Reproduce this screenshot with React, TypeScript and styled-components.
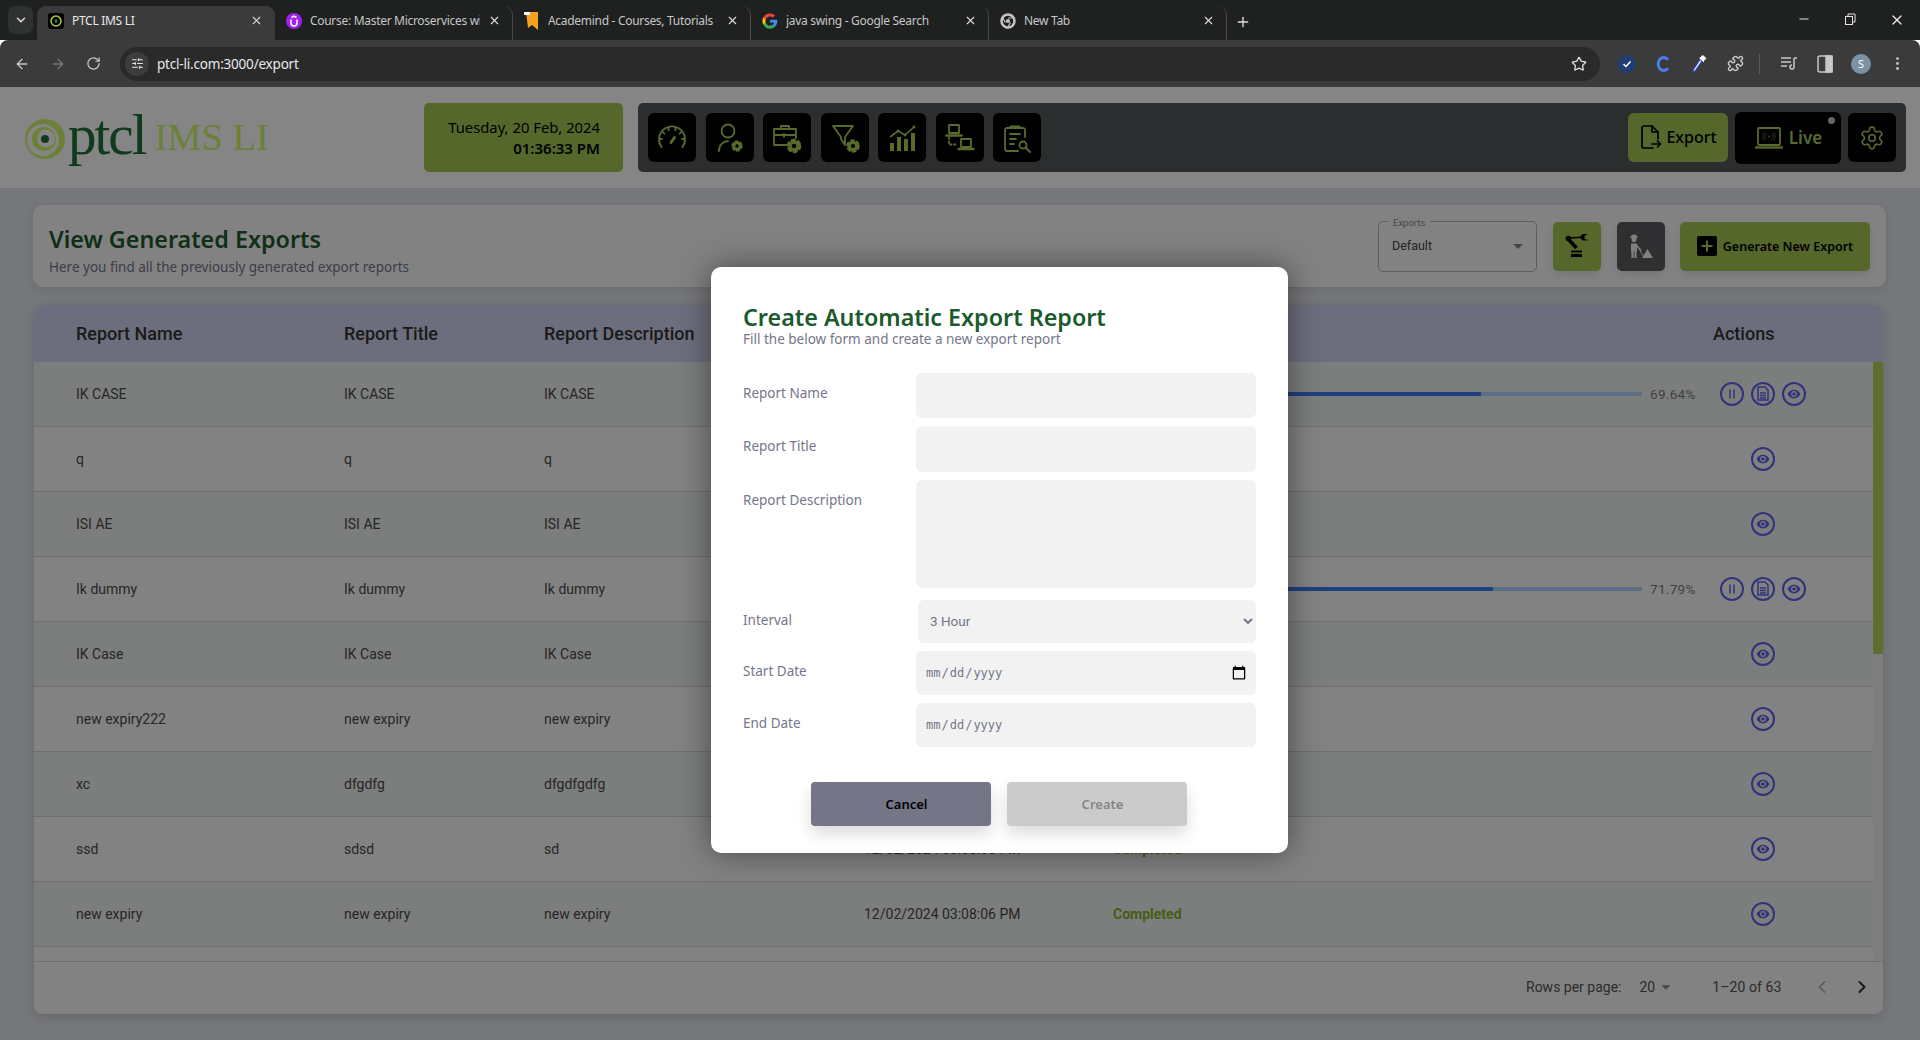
import React from 'react'
import styled, { createGlobalStyle } from 'styled-components'
import { Settings, Star, ArrowLeft, ArrowRight, RotateCw, ChevronDown, ChevronLeft, ChevronRight, X, Plus, Minus, MoreVertical, Puzzle, SlidersHorizontal } from 'lucide-react'
import { MdRemoveRedEye, MdArrowDropDown } from 'react-icons/md'

const GlobalStyle = createGlobalStyle`
  html, body { margin: 0; padding: 0; height: 100%; overflow: hidden; }
  #root { height: 100%; }
  * { box-sizing: border-box; }
  body { font-family: "Noto Sans", sans-serif; }
`

const Shell = styled.div`
  width: 1920px;
  height: 1040px;
  display: flex;
  flex-direction: column;
`

/* browser chrome */
const TabStrip = styled.div`
  height: 40px;
  background: #1f2121;
  display: flex;
  align-items: flex-end;
  padding-left: 8px;
  position: relative;
`

const TabSearch = styled.div`
  width: 25px;
  height: 28px;
  margin-bottom: 6px;
  margin-right: 4px;
  background: #303131;
  border-radius: 8px;
  color: #ddd;
  display: flex;
  align-items: center;
  justify-content: center;
`

const Tab = styled.div<{ $active?: boolean; $sep?: boolean }>`
  width: 238px;
  height: 34px;
  flex: none;
  display: flex;
  align-items: center;
  padding-left: 11px;
  padding-bottom: 5px;
  position: relative;
  background: ${p => (p.$active ? '#3b3b3b' : 'transparent')};
  border-radius: 9px 9px 0 0;
  color: ${p => (p.$active ? '#e8e8e8' : '#c6c6c6')};
  font-size: 12px;
  border-right: ${p => (p.$sep ? '1px solid #4a4a4a' : 'none')};
  background-clip: ${p => (p.$sep ? 'padding-box' : 'border-box')};
`

const TabTitle = styled.span`
  width: 170px;
  margin-left: 8px;
  white-space: nowrap;
  overflow: hidden;
  letter-spacing: -0.3px;
`

const TabClose = styled.span`
  margin-left: 8px;
  color: #ddd;
  display: flex;
`

const NewTab = styled.span`
  color: #ddd;
  margin-left: 8px;
  margin-bottom: 10px;
  display: flex;
`

const WindowButtons = styled.div`
  margin-left: auto;
  display: flex;
  align-self: center;
  gap: 32px;
  padding-right: 15px;
  color: #e4e4e4;
`

const Toolbar = styled.div`
  height: 47px;
  background: #3b3b3b;
  border-radius: 8px 8px 0 0;
  display: flex;
  align-items: center;
  color: #c8c8c8;
  padding-left: 14px;
`

const NavIcons = styled.div`
  display: flex;
  gap: 20px;
  width: 106px;
`

const Omnibox = styled.div`
  width: 1480px;
  height: 34px;
  background: #2a2a2a;
  border-radius: 17px;
  display: flex;
  align-items: center;
  padding-left: 5px;
  padding-right: 13px;
  color: #e8e8e8;
  font-size: 13.5px;
  letter-spacing: -0.2px;
`

const TuneIcon = styled.span`
  width: 24px;
  height: 24px;
  background: #3d3d3d;
  border-radius: 50%;
  display: flex;
  align-items: center;
  justify-content: center;
  margin-right: 8px;
`

const StarIcon = styled.span`
  margin-left: auto;
  display: flex;
  color: #ddd;
`

const ExtIcons = styled.div`
  display: flex;
  align-items: center;
  margin-left: 17px;
  gap: 16px;
`

const ExtIcon = styled.span`
  width: 20px;
  height: 20px;
  display: flex;
  align-items: center;
  justify-content: center;
`

const ExtDivider = styled.span`
  width: 1px;
  height: 20px;
  background: #5a5a5a;
  margin: 0 3px 0 -2px;
`

const Avatar = styled.span`
  width: 20px;
  height: 20px;
  border-radius: 50%;
  background: #7b93a4;
  color: #fff;
  font-size: 11px;
  display: flex;
  align-items: center;
  justify-content: center;
`

/* app */
const Page = styled.div`
  flex: 1;
  position: relative;
  display: flex;
  flex-direction: column;
  min-height: 0;
  background: #e3e5eb;
`

const Header = styled.header`
  height: 101px;
  background: #fff;
  display: flex;
  padding: 16px 14px 16px 25px;
`

const Logo = styled.div`
  width: 399px;
  display: flex;
  align-items: flex-start;
`

const LogoMark = styled.svg`
  margin-top: 16px;
  flex: none;
`

const LogoPtcl = styled.span`
  font-family: "Liberation Serif", serif;
  font-size: 57px;
  letter-spacing: -2px;
  color: #1d6f3a;
  line-height: 1;
  margin: 3px 0 0 3px;
`

const LogoIms = styled.span`
  font-family: "Liberation Serif", serif;
  font-size: 38.5px;
  line-height: 1;
  color: #cdf76a;
  margin: 15px 0 0 9px;
`

const DateBox = styled.div`
  width: 199px;
  height: 69px;
  background: #a3c653;
  border-radius: 5px;
  display: flex;
  flex-direction: column;
  justify-content: center;
  align-items: flex-end;
  padding-right: 23px;
  color: #000;
  font-size: 14.8px;
  line-height: 21px;
  margin-right: 15px;
`

const TimeText = styled.strong`
  font-weight: 600;
  font-size: 15px;
`

const DarkBar = styled.nav`
  flex: 1;
  height: 69px;
  background: #55575b;
  border-radius: 5px;
  display: flex;
  align-items: center;
  padding: 0 10px;
`

const NavGroup = styled.div`
  display: flex;
  gap: 9.5px;
`

const IconBtn = styled.button`
  width: 48px;
  height: 49px;
  border: none;
  border-radius: 6px;
  background: #000;
  color: #a9cd57;
  padding: 0;
  display: flex;
  align-items: center;
  justify-content: center;
`

const ExportBtn = styled.button`
  width: 100px;
  height: 49px;
  margin-left: auto;
  border: none;
  border-radius: 6px;
  background: #a3c653;
  color: #000;
  font: 500 16px "Noto Sans", sans-serif;
  display: flex;
  align-items: center;
  justify-content: center;
  gap: 3px;
  padding-bottom: 2px;
`

const LiveBtn = styled.button`
  width: 106px;
  height: 52px;
  margin: 0 7px;
  border: none;
  border-radius: 6px;
  background: #000;
  color: #a9cd57;
  font: 600 17px "Noto Sans", sans-serif;
  display: flex;
  align-items: center;
  justify-content: center;
  gap: 5px;
  position: relative;
`

const LiveDot = styled.span`
  position: absolute;
  top: 5px;
  right: 6px;
  width: 7px;
  height: 7px;
  border-radius: 50%;
  background: #c5c5c5;
`

const Content = styled.main`
  flex: 1;
  min-height: 0;
  padding: 17px 34px 0 33px;
  display: flex;
  flex-direction: column;
  gap: 18px;
`

const TitleCard = styled.section`
  height: 82px;
  background: #fafafa;
  border-radius: 10px;
  box-shadow: 0 3px 10px rgba(0, 0, 0, 0.1);
  display: flex;
  align-items: center;
  padding: 0 16px 0 16px;
`

const TitleBlock = styled.div`
  display: flex;
  flex-direction: column;
  margin-top: 8px;
`

const CardTitle = styled.h1`
  margin: 0;
  font-size: 23.3px;
  line-height: 30px;
  font-weight: 600;
  color: #1c5a2e;
`

const CardSub = styled.p`
  margin: 3px 0 0;
  font-size: 13.5px;
  line-height: 20px;
  color: #74768a;
`

const ExportsSelect = styled.div`
  width: 159px;
  height: 51px;
  margin-left: auto;
  border: 1px solid #b5b5b5;
  border-radius: 5px;
  display: flex;
  align-items: center;
  justify-content: space-between;
  padding: 0 6px 1px 13px;
  position: relative;
  font: 400 12.5px Roboto, sans-serif;
  color: #444;
`

const ExportsLabel = styled.span`
  position: absolute;
  top: -5px;
  left: 9px;
  padding: 0 5px;
  background: #fafafa;
  font-size: 9.5px;
  line-height: 11px;
  color: #888;
`

const SquareBtn = styled.button<{ $dark?: boolean }>`
  width: 48px;
  height: 49px;
  margin-left: 16px;
  border: none;
  border-radius: 5px;
  background: ${p => (p.$dark ? '#5a5b60' : '#a3c653')};
  color: ${p => (p.$dark ? '#f5f5f5' : '#000')};
  display: flex;
  align-items: center;
  justify-content: center;
  padding: 0;
  box-shadow: 0 4px 8px rgba(0, 0, 0, 0.1);
`

const GenerateBtn = styled.button`
  width: 190px;
  height: 49px;
  margin-left: 15px;
  border: none;
  border-radius: 5px;
  background: #a3c653;
  color: #000;
  font: 600 12.5px "Noto Sans", sans-serif;
  display: flex;
  align-items: center;
  justify-content: center;
  gap: 6px;
  box-shadow: 0 4px 8px rgba(0, 0, 0, 0.1);
`

const PlusBox = styled.span`
  width: 20px;
  height: 20px;
  background: #000;
  border-radius: 2px;
  color: #a9cd57;
  display: flex;
  align-items: center;
  justify-content: center;
`

const TableCard = styled.section`
  width: 1849px;
  height: 709px;
  margin-left: 1px;
  background: #fafafa;
  border-radius: 8px;
  box-shadow: 0 3px 12px rgba(0, 0, 0, 0.15);
  display: flex;
  flex-direction: column;
  overflow: hidden;
`

const columns = '268px 200px 320px 249px 600px 160px'

const TableHead = styled.div`
  height: 57px;
  flex: none;
  background: #d1d3ef;
  display: grid;
  grid-template-columns: ${columns};
  align-items: center;
  padding: 0 0 0 42px;
  font: 500 18px Roboto, sans-serif;
  color: #333;
`

const TableBody = styled.div`
  height: 599px;
  flex: none;
  display: flex;
  overflow: hidden;
`

const Rows = styled.div`
  width: 1839px;
  flex: none;
`

const Row = styled.div<{ $shade: boolean }>`
  height: 65px;
  display: grid;
  grid-template-columns: ${columns};
  align-items: center;
  padding: 0 0 1px 42px;
  background: ${p => (p.$shade ? '#eef2ef' : '#fafafa')};
  border-bottom: 1px solid #d4d4d4;
  font: 400 14px Roboto, sans-serif;
  color: #4a4a4a;
`

const Scrollbar = styled.div`
  width: 10px;
  flex: none;
  background: #f2f2f2;
`

const ScrollThumb = styled.div`
  height: 292px;
  background: #b0d45d;
`

const StatusDone = styled.span`
  font-weight: 700;
  color: #86b02c;
`

const ProgressWrap = styled.div`
  display: flex;
  align-items: center;
  gap: 8px;
`

const ProgressTrack = styled.div`
  width: 529px;
  height: 4px;
  background: #b3d5ff;
`

const ProgressFill = styled.div`
  height: 100%;
  background: #3c7bf6;
`

const Percent = styled.span`
  font-size: 13.5px;
  color: #7c7c7c;
  letter-spacing: 0.3px;
`

const Actions = styled.div`
  width: 100px;
  display: flex;
  justify-content: center;
  gap: 7px;
`

const ActionBtn = styled.span`
  width: 24px;
  height: 24px;
  border: 2px solid #5e62ea;
  border-radius: 50%;
  color: #5e62ea;
  display: flex;
  align-items: center;
  justify-content: center;
`

const Footer = styled.footer`
  flex: 1;
  border-top: 1px solid #d4d4d4;
  display: flex;
  align-items: center;
  padding: 0 0 2px 1492px;
  font: 400 14px Roboto, sans-serif;
  color: #555;
`

const RowsValue = styled.span`
  margin-left: 18px;
  display: flex;
  align-items: center;
  color: #555;
`

const RowsCount = styled.span`
  margin-left: 35px;
  letter-spacing: 0.1px;
`

const Pager = styled.span<{ $off?: boolean }>`
  display: flex;
  color: ${p => (p.$off ? '#aaa' : '#333')};
  margin-left: ${p => (p.$off ? '30px' : '20px')};
`

/* modal */
const Overlay = styled.div`
  position: absolute;
  inset: 0;
  background: rgba(0, 0, 0, 0.48);
  padding: 180px 0 0 711px;
`

const Modal = styled.div`
  width: 577px;
  height: 586px;
  background: #fff;
  border-radius: 10px;
  padding: 36px 32px 0;
  box-shadow: 0 0 32px rgba(0, 0, 0, 0.45);
`

const ModalTitle = styled.h2`
  margin: 0;
  font-size: 23.3px;
  line-height: 28px;
  font-weight: 600;
  color: #1c5a2e;
`

const ModalSub = styled.p`
  margin: 0;
  font-size: 13.5px;
  line-height: 16px;
  color: #74768a;
`

const Form = styled.form`
  margin-top: 26px;
  display: flex;
  flex-direction: column;
  gap: 8px;
`

const FieldRow = styled.label<{ $gapTop?: boolean }>`
  display: flex;
  margin-top: ${p => (p.$gapTop ? '4px' : '0')};
`

const FieldLabel = styled.span`
  width: 173px;
  flex: none;
  padding-top: 10px;
  font-size: 13.5px;
  line-height: 20px;
  color: #74768a;
`

const TextField = styled.input<{ $h: number }>`
  flex: 1;
  height: ${p => p.$h}px;
  border: none;
  border-radius: 6px;
  background: #f2f2f2;
  outline: none;
`

const AreaField = styled.textarea`
  flex: 1;
  height: 108px;
  border: none;
  border-radius: 6px;
  background: #f2f2f2;
  outline: none;
  resize: none;
`

const SelectField = styled.select`
  flex: 1;
  height: 43px;
  margin-left: 2px;
  border: none;
  border-radius: 6px;
  background-color: #f2f2f2;
  padding: 0 0 2px 8px;
  font: 400 13.5px Roboto, sans-serif;
  color: #74768a;
  outline: none;
`

const DateField = styled.input<{ $noIcon?: boolean }>`
  flex: 1;
  height: 44px;
  border: none;
  border-radius: 6px;
  background: #f2f2f2;
  padding: 0 9px;
  font: 400 12px "DejaVu Sans Mono", monospace;
  color: #74768a;
  outline: none;
  &::-webkit-calendar-picker-indicator {
    opacity: ${p => (p.$noIcon ? 0 : 1)};
    width: 16px;
    height: 16px;
    padding: 0;
  }
`

const ModalActions = styled.div`
  margin-top: 35px;
  padding-right: 2px;
  display: flex;
  justify-content: center;
  gap: 16px;
`

const ModalBtn = styled.button<{ $muted?: boolean }>`
  width: 180px;
  height: 44px;
  border: none;
  border-radius: 4px;
  padding: 0 0 1px 12px;
  background: ${p => (p.$muted ? '#cbcbcb' : '#747687')};
  color: ${p => (p.$muted ? '#858585' : '#000')};
  font: 600 13px "Noto Sans", sans-serif;
  box-shadow: 0 8px 16px rgba(0, 0, 0, 0.14);
`

/* drawings */
const Cog = ({ x, y, r = 5 }: { x: number; y: number; r?: number }) => (
  <g>
    <circle cx={x} cy={y} r={r * 0.62} fill="none" stroke="currentColor" strokeWidth={r * 0.55} />
    <circle cx={x} cy={y} r={r * 0.95} fill="none" stroke="currentColor" strokeWidth={r * 0.35} strokeDasharray={`${r * 0.5} ${r * 0.5}`} />
  </g>
)

const NavSvg = ({ children }: { children: React.ReactNode }) => (
  <svg width="32" height="32" viewBox="0 0 32 32" fill="none" stroke="currentColor" strokeWidth="1.8" strokeLinecap="round" strokeLinejoin="round">
    {children}
  </svg>
)

const GaugeIcon = () => (
  <NavSvg>
    <path d="M5.5 25 A13 13 0 1 1 26.5 25" />
    <path d="M3.5 17h2.5M6.5 10l2 1.6M12 6l.8 2.2M20 6l-.8 2.2M25.5 10l-2 1.6M28.5 17H26" />
    <path d="M15 20.5l3.5-5" strokeWidth="3" />
  </NavSvg>
)

const UserCogIcon = () => (
  <NavSvg>
    <circle cx="14" cy="9" r="6.5" />
    <path d="M5 29c0-6 4-9.500 9-10" />
    <Cog x={23} y={24} r={5} />
  </NavSvg>
)

const CaseCogIcon = () => (
  <NavSvg>
    <path d="M19 23H3V7h22v9M3 13h22M10 7V4h8v3" />
    <path d="M13 12v3" />
    <Cog x={23} y={24} r={6.5} />
  </NavSvg>
)

const FilterCogIcon = () => (
  <NavSvg>
    <path d="M4 4h20L16 15v8l-4-6v-2z" />
    <Cog x={24} y={24} r={6} />
  </NavSvg>
)

const ChartIcon = () => (
  <svg width="32" height="32" viewBox="0 0 32 32" fill="currentColor" stroke="none">
    <rect x="4" y="21" width="4" height="8" />
    <rect x="11" y="15" width="4" height="14" />
    <rect x="18" y="17" width="4" height="12" />
    <rect x="25" y="11" width="4" height="18" />
    <path d="M4 15l8-6 7 4 9-8" fill="none" stroke="currentColor" strokeWidth="1.6" />
    <circle cx="12" cy="9" r="1.4" />
    <circle cx="19" cy="13" r="1.4" />
    <circle cx="28" cy="5" r="1.4" />
  </svg>
)

const NetworkIcon = () => (
  <NavSvg>
    <rect x="5" y="3" width="10" height="8" />
    <path d="M2.500 13.500h15" strokeWidth="2.500" />
    <rect x="17" y="17" width="10" height="8" />
    <path d="M14.500 27h15" strokeWidth="2.500" />
    <path d="M5 15.500v7h8" strokeDasharray="1.500 2.500" />
  </NavSvg>
)

const ClipSearchIcon = () => (
  <NavSvg>
    <path d="M24 15V8a2 2 0 0 0-2-2H6a2 2 0 0 0-2 2v19a2 2 0 0 0 2 2h11" />
    <path d="M9.500 6V4.500h9V6" />
    <path d="M9 12h10M9 17h6M9 22h4" />
    <circle cx="22" cy="23" r="3.500" />
    <path d="M25 26l4 4" strokeWidth="2.200" />
  </NavSvg>
)

const ExportIcon = () => (
  <svg width="24" height="26" viewBox="0 0 24 26" fill="none" stroke="currentColor" strokeWidth="1.7" strokeLinecap="round" strokeLinejoin="round">
    <path d="M14 24H5a2 2 0 0 1-2-2V4a2 2 0 0 1 2-2h8l6 6v7" />
    <path d="M13 2v6h6" />
    <path d="M13 20h8M18.500 17l3 3-3 3" />
  </svg>
)

const LiveIcon = () => (
  <svg width="30" height="26" viewBox="0 0 30 26" fill="none" stroke="currentColor" strokeWidth="1.8">
    <rect x="4" y="3" width="22" height="17" rx="1" />
    <path d="M1 22.500h28" strokeWidth="2.200" />
    <circle cx="15" cy="11.500" r="1" fill="#777" stroke="none" />
    <path d="M12.500 8.500a4 4 0 0 0 0 6M17.500 8.500a4 4 0 0 1 0 6M10.500 7a7 7 0 0 0 0 9M19.500 7a7 7 0 0 1 0 9" stroke="#777" strokeWidth="0.8" />
  </svg>
)

const RobotArmIcon = () => (
  <svg width="24" height="26" viewBox="0 0 24 26" fill="currentColor">
    <circle cx="3.500" cy="5.500" r="2.800" />
    <path d="M3 5l14-.8" stroke="currentColor" strokeWidth="1.600" />
    <path d="M15 3.500l3-2.500h5l-3.500 2v2.500l3.500 2h-5l-3-2.500z" />
    <path d="M4 7l7.500 8" stroke="currentColor" strokeWidth="3.500" />
    <rect x="6" y="17.500" width="11" height="2" />
    <rect x="6" y="21" width="11" height="3" />
  </svg>
)

const DiggerIcon = () => (
  <svg width="28" height="26" viewBox="0 0 28 26" fill="currentColor">
    <circle cx="7" cy="6.500" r="2.500" />
    <path d="M3.500 5a3.500 3.500 0 0 1 7 0z" />
    <path d="M4 10.500h6v8H4z" />
    <path d="M5.500 18v7M8.500 18v7" stroke="currentColor" strokeWidth="2.200" />
    <path d="M9 11.500l5 6" stroke="currentColor" strokeWidth="1.400" />
    <path d="M11 14l5 9" stroke="currentColor" strokeWidth="0.900" />
    <path d="M15 25l5.500-9 5.500 9z" />
  </svg>
)

const PauseIcon = () => (
  <svg width="12" height="12" viewBox="0 0 12 12" stroke="currentColor" strokeWidth="1.500">
    <path d="M4 1.500v9M8 1.500v9" />
  </svg>
)

const DocIcon = () => (
  <svg width="14" height="15" viewBox="0 0 14 15" fill="none" stroke="currentColor" strokeWidth="1.500">
    <path d="M2 1h7l3 3v10H2z" />
    <path d="M4 7h6M4 9.500h6M4 12h6" />
  </svg>
)

const PtclMark = () => (
  <LogoMark width="40" height="40" viewBox="0 0 40 40">
    <path
      fillRule="evenodd"
      fill="#cdf76a"
      d="M20 0a20 20 0 1 1 0 40a20 20 0 0 1 0-40zM18 5a16 16 0 1 0 0 32a16 16 0 0 0 0-32z"
    />
    <path
      fillRule="evenodd"
      fill="#cdf76a"
      d="M19 8a12 12 0 1 1 0 24a12 12 0 0 1 0-24zM21 10.500a9 9 0 1 0 0 18a9 9 0 0 0 0-18z"
    />
    <circle cx="20" cy="20" r="4" fill="#1d6f3a" />
  </LogoMark>
)

const FavPtcl = () => (
  <svg width="16" height="16" viewBox="0 0 16 16"><rect width="16" height="16" rx="3" fill="#000" /><circle cx="8" cy="8" r="5" fill="none" stroke="#a9cd57" strokeWidth="1.500" /><circle cx="8" cy="8" r="1.500" fill="#1d9c4a" /></svg>
)

const FavUdemy = () => (
  <svg width="16" height="16" viewBox="0 0 16 16"><circle cx="8" cy="8" r="8" fill="#a020f0" /><path d="M5 6.500V10a3 3 0 0 0 6 0V6.500M5.500 4.500L8 3l2.500 1.500" fill="none" stroke="#fff" strokeWidth="1.500" /></svg>
)

const FavAcademind = () => (
  <svg width="16" height="18" viewBox="0 0 16 18"><path d="M2 0h12v18l-6-5-4 3z" fill="#f6a21e" /><path d="M0 0h6v3H0z" fill="#fff" /></svg>
)

const FavGoogle = () => (
  <svg width="16" height="16" viewBox="0 0 24 24">
    <path fill="#4285f4" d="M23 12.300c0-.8-.1-1.600-.2-2.300H12v4.400h6.200c-.3 1.400-1.100 2.600-2.300 3.400v2.800h3.700c2.100-2 3.400-4.900 3.400-8.300z" />
    <path fill="#34a853" d="M12 23.500c3.100 0 5.700-1 7.600-2.800l-3.700-2.900c-1 .7-2.300 1.100-3.900 1.100-3 0-5.500-2-6.400-4.700H1.800v2.900a11.500 11.500 0 0 0 10.200 6.400z" />
    <path fill="#fbbc05" d="M5.600 14.200a6.900 6.900 0 0 1 0-4.400V6.900H1.800a11.500 11.500 0 0 0 0 10.200z" />
    <path fill="#ea4335" d="M12 5.100c1.700 0 3.200.6 4.400 1.700l3.300-3.300A11.500 11.500 0 0 0 1.800 6.900l3.800 2.900C6.500 7.100 9 5.100 12 5.100z" />
  </svg>
)

const FavChrome = () => (
  <svg width="16" height="16" viewBox="0 0 16 16" fill="none"><circle cx="8" cy="8" r="6.500" stroke="#c6c6c6" strokeWidth="2.500" /><circle cx="8" cy="8" r="2" fill="#c6c6c6" /><path d="M8 5h7M5.500 9.500L2 3.500M10.500 9.500L7 15.500" stroke="#c6c6c6" strokeWidth="1.200" /></svg>
)

const tabs = [
  { title: 'PTCL IMS LI', icon: <FavPtcl />, active: true },
  { title: 'Course: Master Microservices with Spring', icon: <FavUdemy />, sep: true },
  { title: 'Academind - Courses, Tutorials', icon: <FavAcademind />, sep: true },
  { title: 'java swing - Google Search', icon: <FavGoogle />, sep: true },
  { title: 'New Tab', icon: <FavChrome />, sep: true },
]

const stamp = '12/02/2024 03:08:06 PM'

const rows = [
  { name: 'IK CASE', title: 'IK CASE', desc: 'IK CASE', progress: 69.64 },
  { name: 'q', title: 'q', desc: 'q' },
  { name: 'ISI AE', title: 'ISI AE', desc: 'ISI AE' },
  { name: 'Ik dummy', title: 'Ik dummy', desc: 'Ik dummy', progress: 71.79 },
  { name: 'IK Case', title: 'IK Case', desc: 'IK Case' },
  { name: 'new expiry222', title: 'new expiry', desc: 'new expiry' },
  { name: 'xc', title: 'dfgdfg', desc: 'dfgdfgdfg' },
  { name: 'ssd', title: 'sdsd', desc: 'sd' },
  { name: 'new expiry', title: 'new expiry', desc: 'new expiry' },
]

const EyeBtn = () => (
  <ActionBtn><MdRemoveRedEye size={14} /></ActionBtn>
)

function App() {
  return (
    <Shell>
      <GlobalStyle />
      <TabStrip>
        <TabSearch><ChevronDown size={14} strokeWidth={2.5} /></TabSearch>
        {tabs.map(t => (
          <Tab key={t.title} $active={t.active} $sep={t.sep}>
            {t.icon}
            <TabTitle>{t.title}</TabTitle>
            <TabClose><X size={13} /></TabClose>
          </Tab>
        ))}
        <NewTab><Plus size={16} /></NewTab>
        <WindowButtons>
          <Minus size={14} />
          <svg width="14" height="14" viewBox="0 0 14 14" fill="none" stroke="currentColor"><rect x="2.500" y="4.500" width="7" height="8" /><path d="M5 4V2h7v8h-2" /></svg>
          <X size={16} />
        </WindowButtons>
      </TabStrip>
      <Toolbar>
        <NavIcons>
          <ArrowLeft size={16} />
          <ArrowRight size={16} color="#777" />
          <RotateCw size={15} />
        </NavIcons>
        <Omnibox>
          <TuneIcon><SlidersHorizontal size={13} /></TuneIcon>
          ptcl-li.com:3000/export
          <StarIcon><Star size={16} /></StarIcon>
        </Omnibox>
        <ExtIcons>
          <ExtIcon>
            <svg width="18" height="18" viewBox="0 0 18 18"><circle cx="9" cy="9" r="9" fill="#1f3f73" /><path d="M5.500 9l2.500 2.500 4.500-5" fill="none" stroke="#fff" strokeWidth="1.500" /></svg>
          </ExtIcon>
          <ExtIcon>
            <svg width="16" height="18" viewBox="0 0 16 18"><path d="M13 5a5.500 6.500 0 1 0 0 8" fill="none" stroke="#4b7bec" strokeWidth="3" /></svg>
          </ExtIcon>
          <ExtIcon>
            <svg width="18" height="20" viewBox="0 0 18 20"><path d="M12 7L5 17l-2 1 .5-2.500L10 5.500z" fill="#fff" stroke="#3046c0" strokeWidth="1.200" /><path d="M9.500 4l4.500 4M13 1.500l3 3-3 2.500-3-3z" fill="#fff" stroke="#fff" /></svg>
          </ExtIcon>
          <ExtIcon><Puzzle size={17} /></ExtIcon>
          <ExtDivider />
          <ExtIcon>
            <svg width="18" height="16" viewBox="0 0 18 16" fill="none" stroke="currentColor" strokeWidth="1.500"><path d="M1 2h10M1 6h10M1 10h6M14 2v9a2 2 0 1 1-2-2M14 2h3" /></svg>
          </ExtIcon>
          <ExtIcon>
            <svg width="16" height="18" viewBox="0 0 16 18" fill="none" stroke="currentColor" strokeWidth="1.500"><rect x="1" y="1" width="14" height="16" rx="2" /><rect x="9" y="1" width="6" height="16" fill="currentColor" /></svg>
          </ExtIcon>
          <Avatar>S</Avatar>
          <ExtIcon><MoreVertical size={17} /></ExtIcon>
        </ExtIcons>
      </Toolbar>
      <Page>
        <Header>
          <Logo>
            <PtclMark />
            <LogoPtcl>ptcl</LogoPtcl>
            <LogoIms>IMS LI</LogoIms>
          </Logo>
          <DateBox>
            <span>Tuesday, 20 Feb, 2024</span>
            <TimeText>01:36:33 PM</TimeText>
          </DateBox>
          <DarkBar>
            <NavGroup>
              <IconBtn><GaugeIcon /></IconBtn>
              <IconBtn><UserCogIcon /></IconBtn>
              <IconBtn><CaseCogIcon /></IconBtn>
              <IconBtn><FilterCogIcon /></IconBtn>
              <IconBtn><ChartIcon /></IconBtn>
              <IconBtn><NetworkIcon /></IconBtn>
              <IconBtn><ClipSearchIcon /></IconBtn>
            </NavGroup>
            <ExportBtn><ExportIcon />Export</ExportBtn>
            <LiveBtn><LiveIcon />Live<LiveDot /></LiveBtn>
            <IconBtn><Settings size={26} strokeWidth={1.5} /></IconBtn>
          </DarkBar>
        </Header>
        <Content>
          <TitleCard>
            <TitleBlock>
              <CardTitle>View Generated Exports</CardTitle>
              <CardSub>Here you find all the previously generated export reports</CardSub>
            </TitleBlock>
            <ExportsSelect>
              <ExportsLabel>Exports</ExportsLabel>
              Default
              <MdArrowDropDown size={24} color="#888" />
            </ExportsSelect>
            <SquareBtn><RobotArmIcon /></SquareBtn>
            <SquareBtn $dark><DiggerIcon /></SquareBtn>
            <GenerateBtn><PlusBox><Plus size={16} strokeWidth={3} /></PlusBox>Generate New Export</GenerateBtn>
          </TitleCard>
          <TableCard>
            <TableHead>
              <span>Report Name</span>
              <span>Report Title</span>
              <span>Report Description</span>
              <span>Created At</span>
              <span>Status</span>
              <span>Actions</span>
            </TableHead>
            <TableBody>
              <Rows>
                {rows.map((r, i) => (
                  <Row key={r.name + i} $shade={i % 2 === 0}>
                    <span>{r.name}</span>
                    <span>{r.title}</span>
                    <span>{r.desc}</span>
                    <span>{stamp}</span>
                    {r.progress ? (
                      <ProgressWrap>
                        <ProgressTrack>
                          <ProgressFill style={{ width: `${r.progress}%` }} />
                        </ProgressTrack>
                        <Percent>{r.progress}%</Percent>
                      </ProgressWrap>
                    ) : (
                      <StatusDone>Completed</StatusDone>
                    )}
                    <Actions>
                      {r.progress ? <ActionBtn><PauseIcon /></ActionBtn> : null}
                      {r.progress ? <ActionBtn><DocIcon /></ActionBtn> : null}
                      <EyeBtn />
                    </Actions>
                  </Row>
                ))}
              </Rows>
              <Scrollbar><ScrollThumb /></Scrollbar>
            </TableBody>
            <Footer>
              Rows per page:
              <RowsValue>20<MdArrowDropDown size={22} color="#888" /></RowsValue>
              <RowsCount>1–20 of 63</RowsCount>
              <Pager $off><ChevronLeft size={20} /></Pager>
              <Pager><ChevronRight size={20} strokeWidth={2.5} /></Pager>
            </Footer>
          </TableCard>
        </Content>
        <Overlay>
          <Modal>
            <ModalTitle>Create Automatic Export Report</ModalTitle>
            <ModalSub>Fill the below form and create a new export report</ModalSub>
            <Form>
              <FieldRow>
                <FieldLabel>Report Name</FieldLabel>
                <TextField $h={45} />
              </FieldRow>
              <FieldRow>
                <FieldLabel>Report Title</FieldLabel>
                <TextField $h={46} />
              </FieldRow>
              <FieldRow>
                <FieldLabel>Report Description</FieldLabel>
                <AreaField />
              </FieldRow>
              <FieldRow $gapTop>
                <FieldLabel>Interval</FieldLabel>
                <SelectField defaultValue="3">
                  <option value="1">1 Hour</option>
                  <option value="3">3 Hour</option>
                  <option value="6">6 Hour</option>
                </SelectField>
              </FieldRow>
              <FieldRow>
                <FieldLabel>Start Date</FieldLabel>
                <DateField type="date" />
              </FieldRow>
              <FieldRow>
                <FieldLabel>End Date</FieldLabel>
                <DateField type="date" $noIcon />
              </FieldRow>
            </Form>
            <ModalActions>
              <ModalBtn type="button">Cancel</ModalBtn>
              <ModalBtn type="button" $muted>Create</ModalBtn>
            </ModalActions>
          </Modal>
        </Overlay>
      </Page>
    </Shell>
  )
}

export default App
